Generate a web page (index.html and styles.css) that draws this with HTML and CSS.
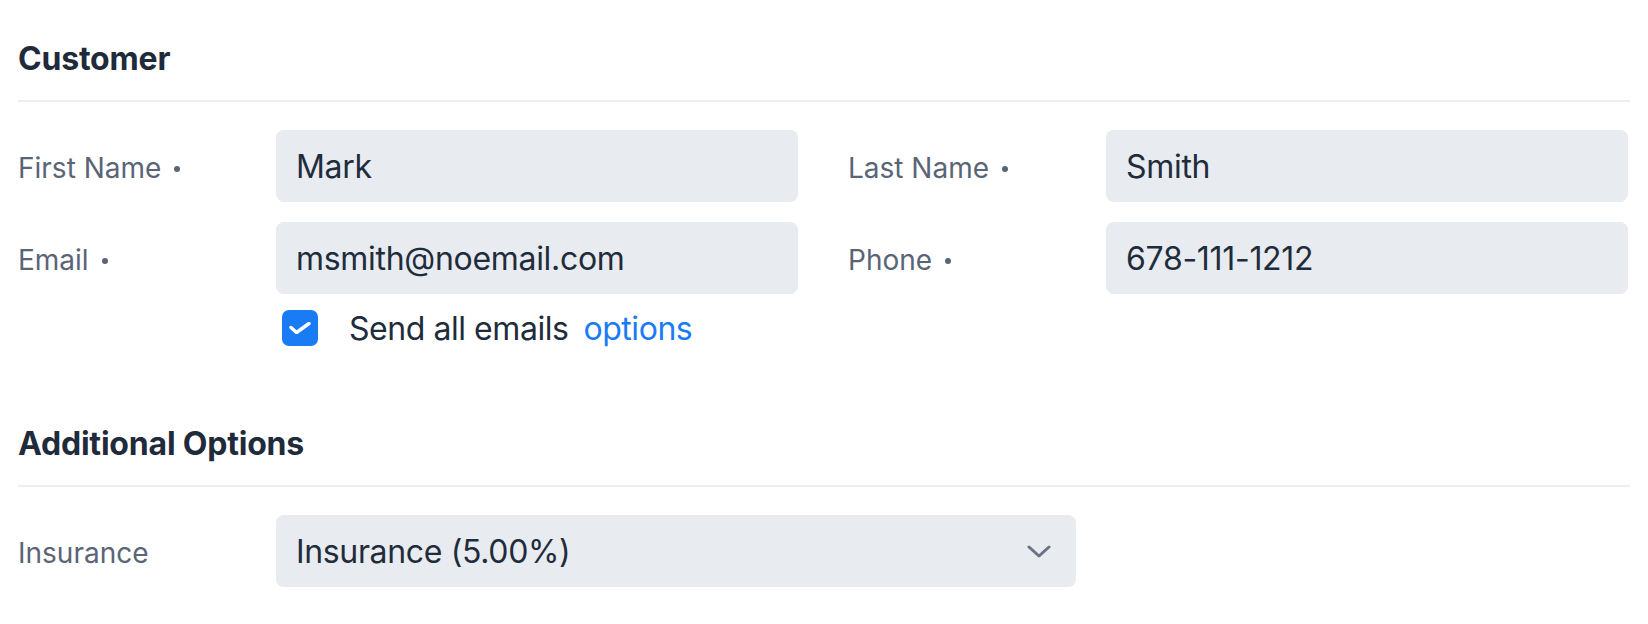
FILE: index.html
```html
<!DOCTYPE html>
<html lang="en">
<head>
<meta charset="utf-8">
<title>Customer</title>
<link rel="stylesheet" href="styles.css">
</head>
<body>
<main class="form">
  <section class="section">
    <h2 class="section-title">Customer</h2>
    <div class="grid">
      <div class="field">
        <label class="label" for="fn">First Name<span class="req"></span></label>
        <input class="input" id="fn" value="Mark">
      </div>
      <div class="field">
        <label class="label" for="ln">Last Name<span class="req"></span></label>
        <input class="input" id="ln" value="Smith">
      </div>
      <div class="field">
        <label class="label" for="em">Email<span class="req"></span></label>
        <input class="input" id="em" value="msmith@noemail.com">
      </div>
      <div class="field">
        <label class="label" for="ph">Phone<span class="req"></span></label>
        <input class="input" id="ph" value="678-111-1212">
      </div>
    </div>
    <div class="check-row">
      <span class="checkbox">
        <svg width="22" height="12" viewBox="0 0 22 12"><path d="M2 5.5 L7.5 10.5 L20 1.5" fill="none" stroke="#fff" stroke-width="3.4" stroke-linecap="round" stroke-linejoin="round"/></svg>
      </span>
      <span class="check-text">Send all emails</span>
      <a class="link" href="#">options</a>
    </div>
  </section>
  <section class="section section-additional">
    <h2 class="section-title">Additional Options</h2>
    <div class="field field-wide">
      <span class="label">Insurance</span>
      <div class="select">
        <span>Insurance (5.00%)</span>
        <svg class="chevron" width="24" height="13" viewBox="0 0 24 13"><path d="M2 2 L12 11 L22 2" fill="none" stroke="#687385" stroke-width="3" stroke-linecap="round" stroke-linejoin="round"/></svg>
      </div>
    </div>
  </section>
</main>
</body>
</html>
```
FILE: styles.css
```css
html, body {
  margin: 0;
  padding: 0;
  background: #ffffff;
}
body {
  font-family: Inter, "Noto Sans", "Liberation Sans", sans-serif;
  color: #1f2c3c;
}
.form {
  padding: 39px 18px 0 18px;
}
.section-title {
  margin: 0;
  font-size: 32px;
  line-height: 40px;
  font-weight: 700;
  color: #1f2b3b;
  padding-bottom: 21px;
  border-bottom: 2px solid #eceef1;
  letter-spacing: -0.2px;
}
.grid {
  margin-top: 28px;
  margin-right: 2px;
  display: grid;
  grid-template-columns: 1fr 1fr;
  column-gap: 50px;
  row-gap: 20px;
}
.field {
  display: grid;
  grid-template-columns: 258px 1fr;
  align-items: center;
}
.field-wide {
  margin-top: 28px;
  grid-template-columns: 258px 800px;
}
.label {
  font-size: 28px;
  line-height: 36px;
  color: #5a6477;
  padding-top: 4px;
  display: flex;
  align-items: center;
}
.req {
  width: 6px;
  height: 6px;
  border-radius: 50%;
  background: #5a6477;
  margin-left: 13px;
  margin-top: 2px;
}
.input {
  height: 72px;
  box-sizing: border-box;
  border: none;
  outline: none;
  border-radius: 8px;
  background: #e8ebef;
  padding: 0 20px;
  font-family: inherit;
  font-size: 32px;
  letter-spacing: -0.3px;
  color: #1f2c3c;
  width: 100%;
  margin: 0;
}
.check-row {
  margin-top: 16px;
  margin-left: 264px;
  display: flex;
  align-items: center;
  height: 36px;
  font-size: 32px;
  letter-spacing: -0.45px;
}
.checkbox {
  width: 36px;
  height: 36px;
  border-radius: 7px;
  background: #1a7cf5;
  display: flex;
  align-items: center;
  justify-content: center;
  margin-right: 31px;
}
.check-text {
  color: #1f2c3c;
}
.link {
  color: #1a7cf5;
  text-decoration: none;
  margin-left: 15px;
}
.section-additional {
  margin-top: 78px;
}
.select {
  height: 72px;
  box-sizing: border-box;
  border-radius: 8px;
  background: #e8ebef;
  padding: 0 25px 0 20px;
  display: flex;
  align-items: center;
  justify-content: space-between;
  font-size: 32px;
  letter-spacing: -0.35px;
  color: #1f2c3c;
}
.chevron {
  display: block;
}
```
